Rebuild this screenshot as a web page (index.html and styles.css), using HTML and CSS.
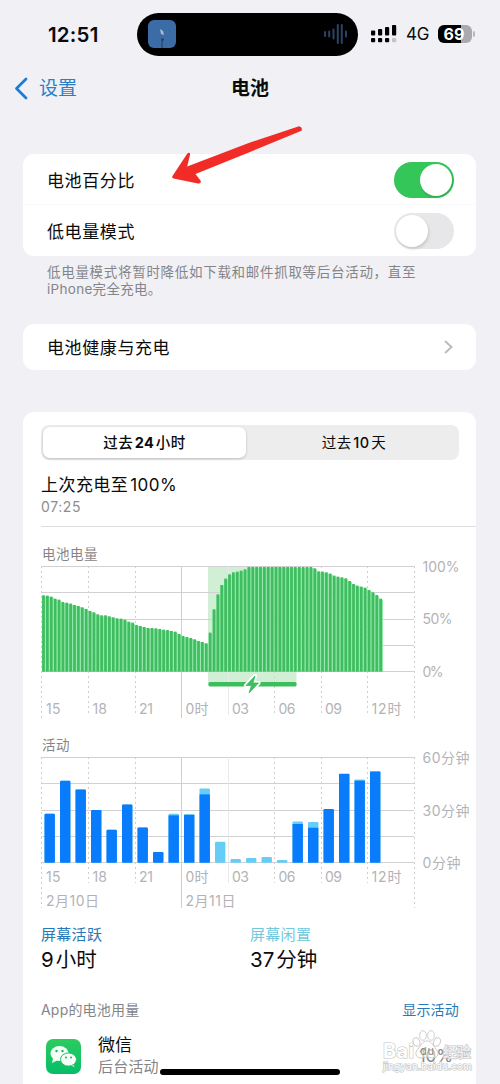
FILE: index.html
```html
<!DOCTYPE html>
<html lang="zh-CN">
<head>
<meta charset="utf-8">
<title>电池</title>
<link rel="stylesheet" href="styles.css">
</head>
<body>
<div class="phone">
  <header class="status">
    <span class="clock">12:51</span>
    <div class="island">
      <svg class="island-app" width="28" height="28" viewBox="0 0 28 28"><rect width="28" height="28" rx="6" fill="#3b6ca5"/><path d="M12 9l3 2 1 4-3-1z" fill="#a9bccb"/><path d="M14 20v8" stroke="#263b59" stroke-width="1"/><circle cx="14.500" cy="19.500" r="1.300" fill="#263b59"/></svg>
      <svg class="wave" width="26" height="24" viewBox="0 0 26 24" fill="none" stroke="#2c4164" stroke-width="2" stroke-linecap="round"><path d="M2 10v4M6.200 9.500v5M10.500 7.500v9M14.800 3v18M18.800 3v18M23 9.500v5"/></svg>
    </div>
    <svg class="signal" width="26" height="18" viewBox="0 0 26 18"><rect x="0" y="5.500" width="4.200" height="5" rx="1"/><rect x="7" y="4" width="4.200" height="6.500" rx="1"/><rect x="14" y="2" width="4.200" height="8.500" rx="1"/><rect x="21" y="0" width="4.200" height="10.500" rx="1"/><rect x="0" y="13" width="4.200" height="4.200" rx="1"/><rect x="7" y="13" width="4.200" height="4.200" rx="1"/><rect x="14" y="13" width="4.200" height="4.200" rx="1"/><rect x="21" y="13" width="4.200" height="4.200" rx="1" fill="#c4c4c8"/></svg>
    <span class="network">4G</span>
    <div class="battery"><span class="battery-level">69</span></div>
    <span class="battery-tip"></span>
  </header>

  <nav class="nav">
    <a class="back"><svg width="14" height="23" viewBox="0 0 14 23" fill="none" stroke="#1c7bd8" stroke-width="2.800" stroke-linecap="round" stroke-linejoin="round"><path d="M12 2L2.500 11.500L12 21"/></svg><span>设置</span></a>
    <h1 class="title">电池</h1>
  </nav>

  <main class="content">
    <section class="card">
      <div class="row row-top"><span>电池百分比</span><span class="switch on"></span></div>
      <div class="row"><span>低电量模式</span><span class="switch"></span></div>
    </section>
    <p class="note"><span class="note-line">低电量模式将暂时降低如下载和邮件抓取等后台活动，直至</span><br>iPhone完全充电。</p>

    <section class="card health">
      <div class="row"><span>电池健康与充电</span><svg class="chevron" width="9" height="14" viewBox="0 0 9 14" fill="none" stroke="#bcbcc0" stroke-width="2"><path d="M1 1l6.500 6L1 13"/></svg></div>
    </section>

    <section class="card usage">
      <div class="segments"><div class="segment selected">过去<b>24</b>小时</div><div class="segment">过去<b>10</b>天</div></div>
      <div class="last">
        <div class="last-title">上次充电至<span class="thin"></span>100%</div>
        <div class="last-time">07:25</div>
      </div>
      <h2 class="chart-title">电池电量</h2>
      <svg class="chart" id="level" width="435" height="160" viewBox="41 560 435 160"></svg>
      <h2 class="chart-title activity">活动</h2>
      <svg class="chart" id="activity" width="435" height="160" viewBox="41 751 435 160"></svg>
      <div class="totals">
        <div class="total"><div class="total-name">屏幕活跃</div><div class="total-value">9<span class="thin"></span>小时</div></div>
        <div class="total idle"><div class="total-name">屏幕闲置</div><div class="total-value">37<span class="thin"></span>分钟</div></div>
      </div>
      <div class="apps-head"><span>App的电池用量</span><a>显示活动</a></div>
      <div class="app">
        <svg class="app-icon" width="35" height="35" viewBox="0 0 35 35">
          <defs><linearGradient id="wg" x1="0" y1="0" x2="0" y2="1"><stop offset="0" stop-color="#2dcc5f"/><stop offset="1" stop-color="#05be68"/></linearGradient></defs>
          <rect width="35" height="35" rx="7" fill="url(#wg)"/>
          <path d="M7 19l-1 5 5-2.500z" fill="#f4fff8"/><ellipse cx="13.500" cy="14.500" rx="9" ry="7.600" fill="#f4fff8"/>
          <path d="M26 23l2.500 5-6-2.500z" fill="#f4fff8"/><ellipse cx="22.500" cy="20.500" rx="8" ry="6.600" fill="#f4fff8" stroke="#1bc565" stroke-width="1"/>
          <g fill="#19b65b"><circle cx="10.500" cy="12" r="1.200"/><circle cx="16.500" cy="12" r="1.200"/><circle cx="20" cy="18.600" r="1"/><circle cx="25" cy="18.600" r="1"/></g>
        </svg>
        <div class="app-text"><div class="app-name">微信</div><div class="app-sub">后台活动</div></div>
        <span class="app-share">10%</span>
      </div>
    </section>
  </main>

  <svg class="arrow" width="140" height="70" viewBox="165 120 140 70"><path d="M172.500 176L187 154Q189 151.500 190.200 154L187.200 166.500L250 142.500L299 126.200Q303 127 301.500 130.800L250 152L195.500 174L200.800 181Q201.200 184 198 183.500L173.500 178.500Q171.500 177.800 172.500 176Z" fill="#f12c27"/></svg>

  <div class="home"></div>
  <svg class="mark" width="100" height="50" viewBox="380 1025 100 50">
    <g fill="#fff" fill-opacity=".5" stroke="#c2c2c2" stroke-width=".8">
      <ellipse cx="416.500" cy="1042" rx="3.300" ry="4.500" transform="rotate(-20 416.500 1042)"/><ellipse cx="423" cy="1035.500" rx="3.300" ry="4.700"/><ellipse cx="431" cy="1035.500" rx="3.300" ry="4.700"/><ellipse cx="437" cy="1042" rx="3.300" ry="4.500" transform="rotate(20 437 1042)"/>
      <path d="M427 1041c5 0 6 5 9 8 4 4 2 9-3 9-3 0-3-1-6-1s-3 1-6 1c-5 0-7-5-3-9 3-3 4-8 9-8z"/>
    </g>
    <text class="mark-name" x="383" y="1057.500" textLength="31">Bai</text>
    <text class="mark-du" x="420" y="1055" textLength="14">du</text>
    <text class="mark-cn" x="443" y="1056.500" textLength="28">经验</text>
    <text class="mark-url" x="383" y="1070" textLength="89" lengthAdjust="spacingAndGlyphs">jingyan.baidu.com</text>
  </svg>
</div>
<script src="charts.js"></script>
</body>
</html>
```
FILE: styles.css
```css
* { box-sizing: border-box; }
body {
  margin: 0;
  background: #f0f0f5;
  color: #0b0b0c;
  font-family: Inter, "Noto Sans CJK SC", sans-serif;
}
.phone {
  position: relative;
  width: 500px;
  height: 1084px;
  overflow: hidden;
}
.status {
  display: flex;
  align-items: center;
  height: 68px;
  padding-left: 48px;
}
.clock { width: 89px; font-size: 20.500px; font-weight: 600; letter-spacing: .2px; }
.island {
  display: flex;
  align-items: center;
  justify-content: space-between;
  width: 221px;
  height: 43px;
  padding: 0 9px 0 11px;
  border-radius: 22px;
  background: #000;
}
.signal { margin-left: 13px; }
.network { width: 32px; margin-left: 9px; font-size: 17px; letter-spacing: -.3px; }
.battery {
  width: 34px;
  height: 18px;
  border-radius: 6px;
  background: linear-gradient(90deg, #000 69%, #a9a9ae 69%);
}
.battery-level {
  display: block;
  padding-right: 2px;
  color: #fff;
  font-size: 16px;
  font-weight: 700;
  line-height: 18px;
  text-align: center;
}
.battery-tip { width: 2px; height: 6px; margin-left: 1px; border-radius: 0 2px 2px 0; background: #b5b5ba; }
.nav {
  display: grid;
  grid-template-columns: 1fr 100px 1fr;
  align-items: center;
  height: 40px;
  padding: 0 14px;
}
.back { display: flex; align-items: center; gap: 11px; color: #2a80c5; font-size: 19px; line-height: 26px; }
.back span, .title { padding-top: 2px; }
.title { margin: 0; font-size: 19px; font-weight: 700; line-height: 26px; text-align: center; }
.content { padding: 46px 24px 0 23px; }
.card { border-radius: 11px; background: #fff; }
.row {
  display: flex;
  align-items: center;
  justify-content: space-between;
  height: 51px;
  padding: 0 22px 0 24px;
  font-size: 17px;
  line-height: 24px;
  letter-spacing: .6px;
}
.row > span:first-child { padding-top: 2px; }
.row-top { border-bottom: 1px solid #fafafa; }
.row-top > span:first-child { padding-top: 3px; }
.switch {
  display: flex;
  width: 60px;
  height: 36px;
  padding: 2px;
  border-radius: 18px;
  background: #e7e7e9;
}
.switch::after { content: ""; width: 32px; height: 32px; border-radius: 50%; background: #fff; box-shadow: 1px 2px 3px #0002; }
.switch.on { justify-content: flex-end; margin-top: 2px; background: #34c658; }
.note { height: 34px; margin: 8px 0 26px 24px; color: #858589; font-size: 13.500px; line-height: 17px; letter-spacing: .3px; white-space: nowrap; }
.note-line { letter-spacing: .7px; }
.thin { display: inline-block; width: 2px; }
.health .row { height: 46px; padding-right: 23px; }
.chevron { display: block; }
.usage { height: 690px; margin-top: 42px; padding: 13px 0 0 18px; }
.segments { display: flex; width: 418px; height: 35px; padding: 2px; border-radius: 8px; background: #ededee; }
.segment {
  flex: 1;
  padding-left: 5px;
  border-radius: 7px;
  font-size: 14.500px;
  font-weight: 400;
  line-height: 31px;
  letter-spacing: .5px;
  text-align: center;
}
.segment b { margin: 0 1.500px; font-weight: 500; }
.selected { flex: 0 0 203px; padding-left: 0; background: #fff; font-weight: 500; box-shadow: 0 1px 3px #0003; }
.selected b { font-weight: 700; }
.last { height: 67px; padding-top: 13px; border-bottom: 1px solid #dededf; }
.last-title { font-size: 17px; line-height: 24px; letter-spacing: .45px; }
.last-time { color: #8d8d90; font-size: 14px; line-height: 20px; letter-spacing: .6px; }
.chart-title { height: 20px; margin: 17px 0 -4px 1px; color: #858588; font-size: 13.500px; font-weight: 400; line-height: 20px; letter-spacing: .5px; }
.activity { margin-top: 15px; }
.chart { display: block; }
.axis { fill: #b3b3b6; font-size: 14px; }
.totals { display: grid; grid-template-columns: 209px 1fr; margin-top: 14px; }
.total-name { color: #2879b7; font-size: 15px; line-height: 20px; letter-spacing: .3px; }
.idle .total-name { color: #72c9dc; }
.total-value { font-size: 20.500px; line-height: 30px; }
.apps-head { display: flex; justify-content: space-between; margin-top: 25px; padding-right: 17px; color: #858588; font-size: 14px; line-height: 20px; letter-spacing: .2px; }
.apps-head a { color: #2879b7; }
.app { display: flex; align-items: flex-start; margin-top: 13px; padding: 0 23px 0 5px; }
.app-icon { margin-top: 6px; }
.app-text { flex: 1; margin-left: 17px; }
.app-name { font-size: 17px; line-height: 24px; }
.app-sub { color: #858588; font-size: 15px; line-height: 20px; letter-spacing: .2px; }
.app-share { margin-top: 11px; color: #858588; font-size: 17px; line-height: 24px; }
.arrow { position: absolute; left: 165px; top: 120px; }
.home { position: absolute; left: 160px; top: 1069px; width: 180px; height: 6px; border-radius: 3px; background: #000; }
.mark { position: absolute; left: 380px; top: 1025px; }
.mark text { fill: #fff; stroke: #c4c4c6; stroke-width: 1.200px; paint-order: stroke; }
.mark-name { font-size: 20px; font-weight: 700; }
.mark .mark-du { fill: #888; stroke: none; font-size: 11px; }
.mark .mark-cn { font-size: 14px; font-weight: 700; fill-opacity: .7; }
.mark-url { font-size: 10px; }
```
FILE: charts.js
```js
const COLUMN = 46.5;
const LEFT = 42;

function rect(x, y, w, h, fill, r = 0) {
  return `<rect x="${x}" y="${y}" width="${w}" height="${h}" rx="${r}" fill="${fill}"/>`;
}
function line(x1, y1, x2, y2, color, dash = '') {
  return `<line x1="${x1}" y1="${y1}" x2="${x2}" y2="${y2}" stroke="${color}" stroke-dasharray="${dash}"/>`;
}
function label(x, y, text, length) {
  return `<text class="axis" x="${x}" y="${y}" textLength="${length}">${text}</text>`;
}
function grid(top, bottom, longBottom) {
  let out = '';
  for (let i = 0; i < 5; i++) out += line(LEFT - .5, Math.round(top + i * 26.25) + .5, 414, Math.round(top + i * 26.25) + .5, '#d1d1d3');
  for (let i = 0; i < 9; i++) {
    const x = Math.floor(LEFT + i * COLUMN) + (i ? .5 : -.5);
    const end = i % 8 === 0 || i === 3 ? longBottom : bottom;
    out += line(x, top, x, end, i === 4 ? '#e9e9eb' : '#cfcfd1', i === 3 || i === 4 ? '' : '2 3');
  }
  return out;
}
function hours(y) {
  return [['15', 14.5], ['18', 14.5], ['21', 14], ['0时', 23], ['03', 17], ['06', 17], ['09', 17], ['12时', 30]]
    .map(([text, length], i) => label(LEFT + i * COLUMN + 4, y, text, length)).join('');
}

/* Quarter-hour battery level, as thirds of a pixel below the top of the plot */
const drop = [
  87, 88, 91, 97, 100, 107, 109, 112, 116, 119, 123, 128, 134, 138, 144, 147, 147, 150, 153, 156,
  157, 160, 166, 169, 176, 179, 182, 185, 185, 186, 188, 190, 191, 194, 196, 203, 209, 212, 215, 219,
  224, 227, 231, 199, 129, 84, 56, 37, 24, 18, 16, 13, 9,
  ...Array(17).fill(2),
  6, 15, 16, 18, 22, 28, 31, 33, 36, 44, 53, 58, 61, 64, 71, 78, 86, 97
];
let level = rect(208, 566.5, 88.5, 119, '#d0efd5') + grid(566, 715, 718);
level += rect(LEFT, 670.5, 341, 1.2, '#5acb78');
drop.forEach((d, i) => {
  const y = 566.3 + d / 3;
  const x = LEFT + i * 3.875;
  level += rect(x, y + 1, 3.875, 670.5 - y, '#8fe8a6') + rect(x + .15, y, 2.7, 671.5 - y, '#40bd61');
});
level += rect(208.5, 682, 88, 4.5, '#3ebd5e', 1.5);
level += '<path d="M255 676L246 685.500h5.500l-2.500 7.500 9.500-10h-5.500z" fill="#3ebd5e" stroke="#fff" stroke-width="4" stroke-linejoin="round"/><path d="M255 676L246 685.500h5.500l-2.500 7.500 9.500-10h-5.500z" fill="#3ebd5e" stroke="#3ebd5e" stroke-width=".8" stroke-linejoin="round"/>';
level += hours(714) + label(422.5, 572, '100%', 37) + label(422.5, 624, '50%', 30) + label(422.5, 677, '0%', 21);
document.getElementById('level').innerHTML = level;

/* Hourly use: height of the active part and of the whole bar */
const use = [
  [49, 49], [82, 82], [73.3, 73.3], [52.7, 52.7], [33, 33], [58.3, 58.3], [35.3, 35.3], [10.7, 10.7],
  [47.3, 49], [47.7, 48.7], [68.3, 74.3], [0, 21], [0, 3.7], [0, 4.7], [0, 5.7], [0, 2.7],
  [38.7, 41.3], [35, 40.7], [53.7, 53.7], [88.7, 89.3], [82, 83.3], [91, 91.7]
];
let activity = grid(757, 883, 908);
use.forEach(([active, total], i) => {
  const x = LEFT + 2.5 + i * 15.5;
  activity += rect(x, 862.7 - total, 10.4, total, '#66cdf7', 1.2);
  if (active) activity += rect(x, 862.7 - active, 10.4, active, '#087cfb', active === total ? 1.2 : 0);
});
activity += hours(882) + label(46, 905.5, '2月10日', 53) + label(185.5, 905.5, '2月11日', 50);
activity += label(422.5, 763, '60分钟', 47) + label(422.5, 815.5, '30分钟', 47) + label(422.5, 868, '0分钟', 38);
document.getElementById('activity').innerHTML = activity;
```
